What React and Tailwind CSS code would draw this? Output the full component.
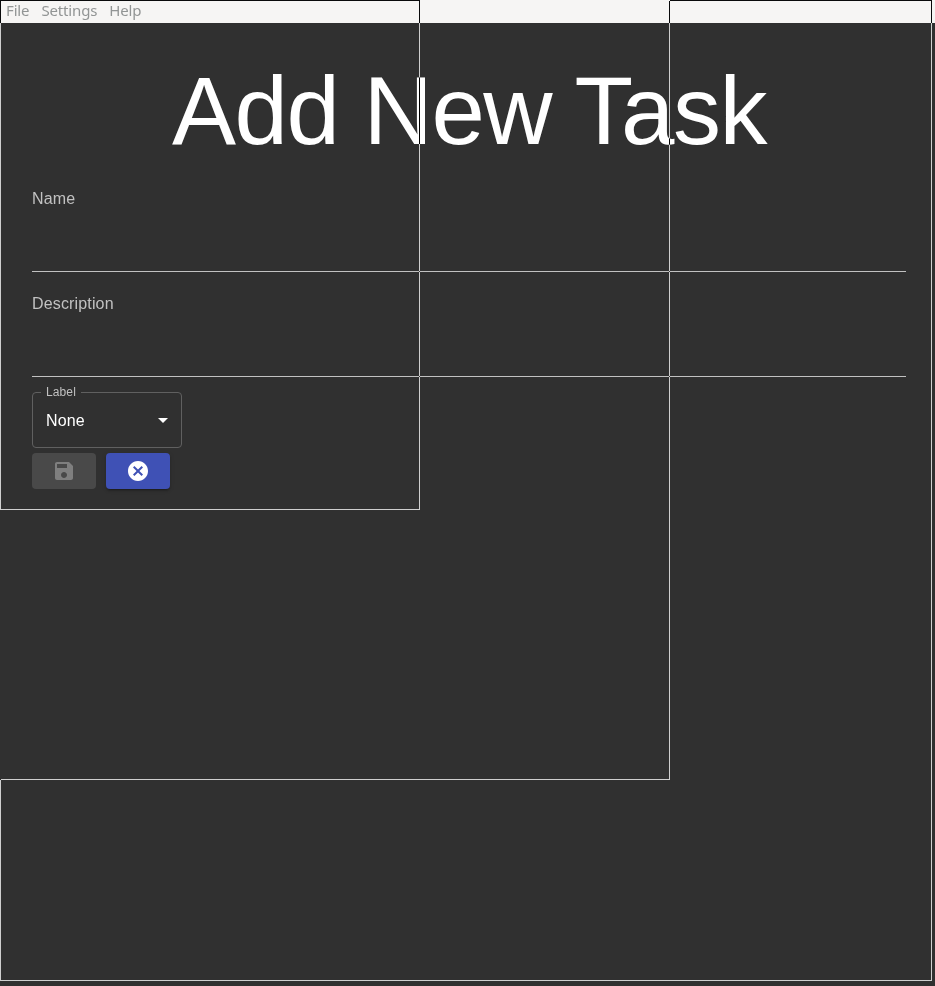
const menus = ["File", "Settings", "Help"];

function Field({ label }) {
  return (
    <label className="block h-[105px]">
      <span className="block h-[82px] text-base leading-5 tracking-[0.15px] text-[#c1c1c1]">{label}</span>
      <span className="block h-px bg-[#c1c1c1]" />
    </label>
  );
}

function Icon({ children }) {
  return (
    <svg viewBox="0 0 24 24" className="size-6" fill="currentColor">
      {children}
    </svg>
  );
}

export default function App() {
  return (
    <div className="relative isolate flex h-[986px] w-[935px] flex-col overflow-hidden bg-[#303030] font-['Liberation_Sans',Arial,sans-serif] text-white">
      <nav className="flex h-[23px] gap-3 bg-[#f6f5f4] pl-1.5 font-['Noto_Sans',sans-serif] text-[15px] leading-5 tracking-[-0.15px] text-[#929595]">
        {menus.map((m) => (
          <span key={m}>{m}</span>
        ))}
      </nav>
      <main className="w-[906px] pl-8 pt-8">
        <h1 className="h-[134px] text-center text-[96px] font-light leading-[112px] tracking-[-1.5px]">Add New Task</h1>
        <Field label="Name" />
        <Field label="Description" />
        <fieldset className="-mt-3 h-[61px] w-[150px] rounded border border-[#606060] pl-2">
          <legend className="h-[11px] px-[5px] text-xs leading-[11px] tracking-[0.11px] text-[#c1c1c1]">Label</legend>
          <div className="flex h-[44px] items-center justify-between pl-[5px] pr-1.5">
            <span className="pt-0.5 text-base tracking-[0.15px]">None</span>
            <Icon>
              <path d="M7 10l5 5 5-5z" />
            </Icon>
          </div>
        </fieldset>
        <div className="mt-[5px] flex gap-2.5">
          <button className="flex h-9 w-16 items-center justify-center rounded bg-[#494949] text-[#7f7f7f]">
            <Icon>
              <path d="M17 3H5c-1.11 0-2 .9-2 2v14c0 1.1.89 2 2 2h14c1.1 0 2-.9 2-2V7l-4-4zm-5 16c-1.66 0-3-1.34-3-3s1.34-3 3-3 3 1.34 3 3-1.34 3-3 3zm3-10H5V5h10v4z" />
            </Icon>
          </button>
          <button className="flex h-9 w-16 items-center justify-center rounded bg-[#3f51b5] shadow-[0_3px_1px_-2px_rgba(0,0,0,0.2),0_2px_2px_0_rgba(0,0,0,0.14),0_1px_5px_0_rgba(0,0,0,0.12)]">
            <Icon>
              <path d="M12 2C6.47 2 2 6.47 2 12s4.47 10 10 10 10-4.47 10-10S17.53 2 12 2zm5 13.59L15.59 17 12 13.41 8.41 17 7 15.59 10.59 12 7 8.41 8.41 7 12 10.59 15.59 7 17 8.41 13.41 12 17 15.59z" />
            </Icon>
          </button>
        </div>
      </main>
      {/* Resize outlines invert whatever they cross */}
      <div className="pointer-events-none absolute left-0 top-0 h-[510px] w-[420px] border border-white mix-blend-difference" />
      <div className="pointer-events-none absolute left-0 top-0 h-[780px] w-[670px] border border-white mix-blend-difference" />
      <div className="pointer-events-none absolute left-0 top-0 h-[981px] w-[932px] border border-white mix-blend-difference" />
    </div>
  );
}
